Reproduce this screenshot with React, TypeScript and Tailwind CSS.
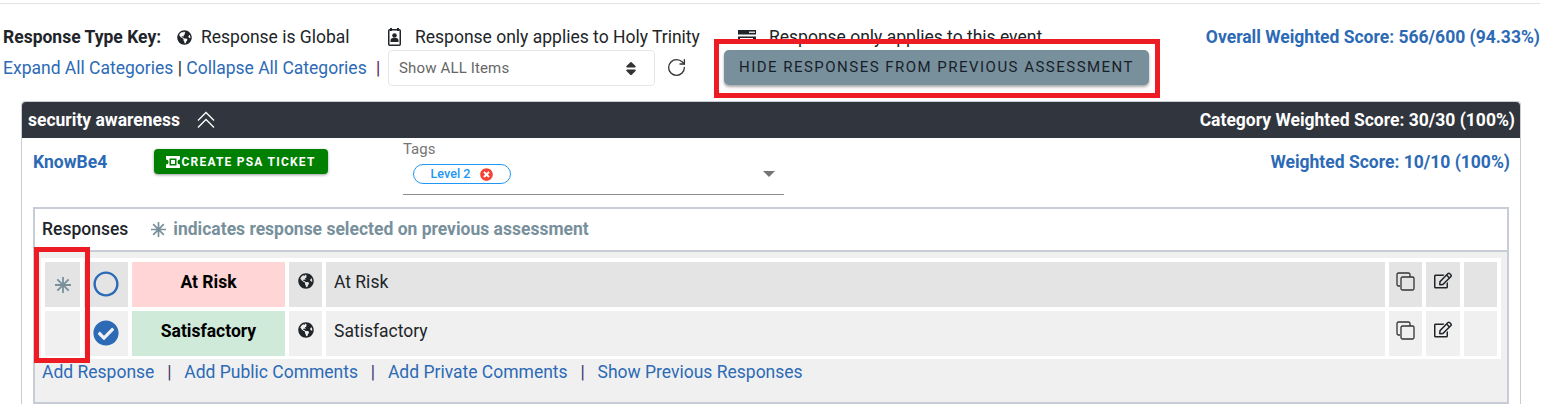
import { RotateCw } from "lucide-react";
import {
  FaCheckCircle,
  FaGlobeAmericas,
  FaRegCircle,
  FaRegEdit,
  FaSort,
  FaTimesCircle,
} from "react-icons/fa";

function EventIcon() {
  return (
    <svg viewBox="0 0 18 14" className="h-[14px] w-[18px]" fill="#212529">
      <rect x="0" y="0" width="18" height="4.500" />
      <rect x="11" y="1.500" width="6" height="1.500" fill="#cfd8dc" />
      <rect x="0" y="6.500" width="18" height="4.500" />
      <rect x="2" y="8" width="13" height="1.500" fill="#fff" />
    </svg>
  );
}

function BadgeIcon() {
  return (
    <svg viewBox="0 0 13 18" className="h-[18px] w-[13px]">
      <rect x="0.750" y="1.750" width="11.500" height="15.500" rx="1" fill="#fff" stroke="#212529" strokeWidth="1.500" />
      <rect x="2" y="0" width="2" height="3" fill="#212529" />
      <rect x="9" y="0" width="2" height="3" fill="#212529" />
      <circle cx="6.500" cy="7.500" r="2.300" fill="#212529" />
      <path d="M2.500 14v-1.500a2.500 2.500 0 0 1 2.500-2.500h3a2.500 2.500 0 0 1 2.500 2.500V14z" fill="#212529" />
    </svg>
  );
}

function TicketIcon() {
  return (
    <svg viewBox="0 0 14 12" className="h-[12px] w-[14px]" fill="#fff">
      <path d="M0 0h14v3.500a2.500 2.500 0 0 0 0 5V12H0V8.500a2.500 2.500 0 0 0 0-5z" />
      <rect x="3.500" y="2.500" width="7" height="7" fill="#008000" />
      <rect x="5" y="4" width="4" height="4" fill="#fff" />
    </svg>
  );
}

function CopyIcon() {
  return (
    <svg viewBox="0 0 19 19" className="h-[19px] w-[19px]" fill="none" stroke="#333" strokeWidth="1.300">
      <path d="M4 14H2.500A1.500 1.500 0 0 1 1 12.500v-10A1.500 1.500 0 0 1 2.500 1h10A1.500 1.500 0 0 1 14 2.500V5" />
      <rect x="5" y="5" width="13" height="13" rx="1.500" />
    </svg>
  );
}

function DoubleUp() {
  return (
    <svg viewBox="0 0 18 18" className="h-[18px] w-[18px]" fill="none" stroke="#fff" strokeWidth="1.300">
      <path d="M1 9.500L9 1.500l8 8M1 16.500L9 8.500l8 8" />
    </svg>
  );
}

function Star({ className }: { className: string }) {
  return (
    <svg viewBox="0 0 16 16" className={className} stroke="#78909c" strokeWidth="1.800">
      <path d="M8 0v16M0 8h16M2.300 2.300l11.400 11.400M13.700 2.300L2.300 13.700" />
    </svg>
  );
}

function Row({
  star,
  checked,
  label,
  labelBg,
  cellBg,
}: {
  star?: boolean;
  checked?: boolean;
  label: string;
  labelBg: string;
  cellBg: string;
}) {
  return (
    <>
      <div className={`flex items-center justify-center ${cellBg}`}>
        {star && <Star className="h-4 w-4" />}
      </div>
      <div className={`flex items-center justify-center pb-[1px] pr-[1px] ${cellBg}`}>
        {checked ? (
          <FaCheckCircle className="h-[26px] w-[26px] text-[#2c6ab5]" />
        ) : (
          <FaRegCircle className="h-[26px] w-[26px] text-[#2c6ab5]" />
        )}
      </div>
      <div className={`pt-[8px] text-center font-bold leading-[24px] text-black ${labelBg}`}>{label}</div>
      <div className={`flex justify-center pt-[11px] ${cellBg}`}>
        <FaGlobeAmericas className="h-[16px] w-[16px] text-[#212529]" />
      </div>
      <div className={`pl-2 pt-[8px] leading-[24px] text-[#212529] ${cellBg}`}>{label}</div>
      <div className={`flex justify-center pt-[10px] ${cellBg}`}>
        <CopyIcon />
      </div>
      <div className={`flex justify-center pt-[10px] ${cellBg}`}>
        <FaRegEdit className="h-[17px] w-[18px] text-[#212529]" />
      </div>
      <div className={cellBg} />
    </>
  );
}

export default function App() {
  return (
    <div className="relative h-[407px] w-[1546px] overflow-hidden bg-white font-['Roboto',sans-serif] text-[17.500px] text-[#212529]">
      <div className="h-[4px] w-[1540px] border-b border-[#e2e2e2]" />

      <div className="flex h-[46px] items-start pl-[3px] pr-[6px] pt-[21px] leading-[24px]">
        <span className="w-[174px] font-bold">Response Type Key:</span>
        <span className="flex w-[211px] items-center gap-[9px]">
          <FaGlobeAmericas className="h-[15px] w-[15px]" />
          Response is Global
        </span>
        <span className="flex w-[350px] items-center gap-[14px]">
          <BadgeIcon />
          Response only applies to Holy Trinity
        </span>
        <span className="flex items-center gap-[13px]">
          <EventIcon />
          Response only applies to this event
        </span>
        <span className="ml-auto font-bold text-[#2c6ab5]">Overall Weighted Score: 566/600 (94.33%)</span>
      </div>

      <div className="flex h-[51px] items-start pl-[3px]">
        <span className="mt-[6px] w-[373px] whitespace-nowrap leading-[24px] text-[#2c6ab5]">
          Expand All Categories <span className="text-[#212529]">|</span> Collapse All Categories
        </span>
        <span className="mt-[6px] w-[12px] leading-[24px] text-[#5a1a5a]">|</span>
        <div className="flex h-[36px] w-[267px] items-center justify-between rounded border border-[#e6e6e6] pl-[10px] pr-[17px] text-[15px] tracking-[0.150px] text-[#666]">
          Show ALL Items
          <FaSort className="h-[17px] w-[12px] text-[#333]" />
        </div>
        <RotateCw className="ml-[11px] mt-[7px] h-[21px] w-[21px] text-[#333]" strokeWidth={1.500} />
        <div className="ml-[37px] flex h-[35px] w-[425px] items-center justify-center rounded-[5px] bg-[#78909c] text-[15px] font-normal tracking-[1.480px] text-[#17202a] shadow-[0_2px_3px_rgba(0,0,0,0.35)]">
          HIDE RESPONSES FROM PREVIOUS ASSESSMENT
        </div>
      </div>

      <div className="ml-[21px] w-[1500px] rounded-t-[4px] border-x border-t border-[#c8ccd4]">
        <div className="flex h-[36px] items-center justify-between rounded-t-[4px] bg-[#31353d] pl-[6px] pr-[5px] font-bold text-white">
          <span className="flex items-center gap-[17px]">
            security awareness
            <DoubleUp />
          </span>
          <span>Category Weighted Score: 30/30 (100%)</span>
        </div>

        <div className="flex h-[69px] items-start pl-[11px] pr-[10px]">
          <span className="mt-[12px] w-[121px] font-bold leading-[24px] text-[#2c6ab5]">KnowBe4</span>
          <div className="mt-[11px] flex h-[25px] w-[174px] items-center justify-center gap-[1px] rounded-[4px] bg-[#008000] text-xs font-bold tracking-[1.220px] text-white shadow-[0_1px_3px_rgba(0,0,0,0.4)]">
            <TicketIcon />
            CREATE PSA TICKET
          </div>
          <div className="relative ml-[75px] h-[57px] w-[381px] border-b border-[#8c8c8c]">
            <span className="block pt-[2px] text-[15px] leading-[18px] text-[#757575]">Tags</span>
            <div className="ml-[10px] mt-[6px] flex h-[20px] w-[98px] items-center justify-center gap-[10px] rounded-full border border-[#2196f3] text-[12.600px] font-medium text-[#2196f3]">
              Level 2
              <FaTimesCircle className="h-[13px] w-[13px] text-[#f44336]" />
            </div>
            <div className="absolute right-[9px] top-[33px] h-0 w-0 border-x-[6px] border-t-[6px] border-x-transparent border-t-[#757575]" />
          </div>
          <span className="ml-auto mt-[12px] font-bold leading-[24px] text-[#2c6ab5]">Weighted Score: 10/10 (100%)</span>
        </div>

        <div className="ml-[11px] h-[197px] w-[1476px] border-2 border-[#c8ccd4]">
          <div className="flex h-[43px] items-center gap-[23px] border-b-2 border-[#c8ccd4] pl-[7px] font-bold">
            <span className="font-medium">Responses</span>
            <span className="flex items-center gap-[7px] text-[#78909c]">
              <Star className="h-[15px] w-[15px]" />
              indicates response selected on previous assessment
            </span>
          </div>
          <div className="h-[150px] bg-[#f0f0f0] pl-[6px] pt-[6px]">
            <div className="grid w-[1460px] grid-cols-[35px_44px_153px_33px_1059px_33px_34px_33px] grid-rows-[45px_45px] gap-1 bg-white p-1 pb-[3px]">
              <Row star label="At Risk" labelBg="bg-[#ffd5d5]" cellBg="bg-[#e4e4e4]" />
              <Row checked label="Satisfactory" labelBg="bg-[#cfead9]" cellBg="bg-[#f0f0f0]" />
            </div>
            <div className="mt-[1px] flex gap-[12.800px] pl-[1px] leading-[24px] text-[#2c6ab5]">
              <span>Add Response</span>
              <span className="text-[#3b3470]">|</span>
              <span>Add Public Comments</span>
              <span className="text-[#3b3470]">|</span>
              <span>Add Private Comments</span>
              <span className="text-[#3b3470]">|</span>
              <span>Show Previous Responses</span>
            </div>
          </div>
        </div>
      </div>

      {/* annotation boxes drawn over the screenshot */}
      <div className="absolute left-[714px] top-[39px] h-[59px] w-[446px] border-[5px] border-[#ed1c24]" />
      <div className="absolute left-[34px] top-[247px] h-[116px] w-[56px] border-[5px] border-[#ed1c24]" />
    </div>
  );
}
